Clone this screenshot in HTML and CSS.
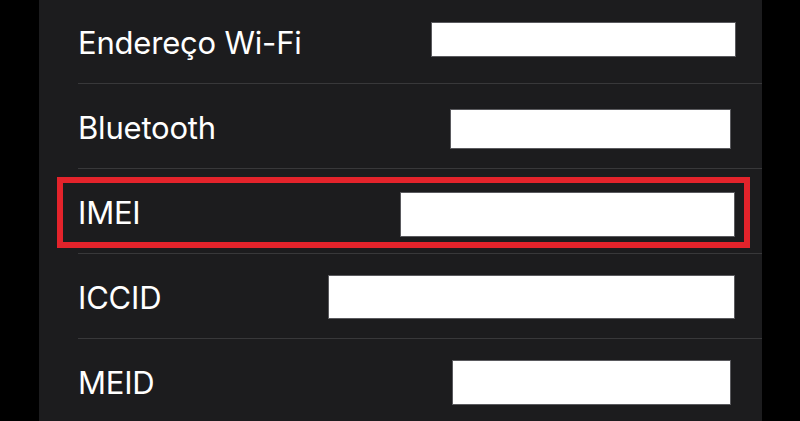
FILE: index.html
```html
<!DOCTYPE html>
<html lang="pt-BR">
<head>
<meta charset="utf-8">
<title>Sobre</title>
<link rel="stylesheet" href="styles.css">
</head>
<body>
<main class="panel">
  <ul class="list">
    <li class="row"><span class="label">Endereço Wi-Fi</span><span class="redact r1"></span></li>
    <li class="row"><span class="label">Bluetooth</span><span class="redact r2"></span></li>
    <li class="row highlight"><span class="label">IMEI</span><span class="redact r3"></span></li>
    <li class="row"><span class="label">ICCID</span><span class="redact r4"></span></li>
    <li class="row last"><span class="label">MEID</span><span class="redact r5"></span></li>
  </ul>
</main>
</body>
</html>
```

FILE: styles.css
```css
html, body {
  margin: 0;
  padding: 0;
  background: #000;
  height: 100%;
  overflow: hidden;
}

.panel {
  margin: 0 38px 0 39px;
  height: 100%;
  background: #1c1c1e;
  overflow: hidden;
}

.list {
  list-style: none;
  margin: -1px 0 0 39px;
  padding: 0;
}

.row {
  position: relative;
  display: flex;
  align-items: center;
  height: 84px;
  border-bottom: 1px solid #38383a;
  font-family: Inter, "Noto Sans", sans-serif;
  font-size: 31px;
  color: #fff;
}

.row.last {
  border-bottom: none;
}

.label {
  letter-spacing: -0.2px;
  margin-top: 2px;
}

.redact {
  margin-left: auto;
  background: #fff;
  box-shadow: 0 0 0 1px #5a5a5e;
}

.r1 { width: 303px; height: 33px; margin-right: 27px; margin-top: -4px; }
.r2 { width: 279px; height: 38px; margin-right: 32px; margin-top: 5px; }
.r3 { width: 333px; height: 43px; margin-right: 28px; margin-top: 6px; }
.r4 { width: 405px; height: 42px; margin-right: 28px; margin-top: 1px; }
.r5 { width: 277px; height: 43px; margin-right: 32px; margin-top: 3px; }

.highlight::after {
  content: "";
  position: absolute;
  left: -21px;
  right: 12px;
  top: 8px;
  bottom: 5px;
  border: 6px solid #e3232b;
  pointer-events: none;
}
```
